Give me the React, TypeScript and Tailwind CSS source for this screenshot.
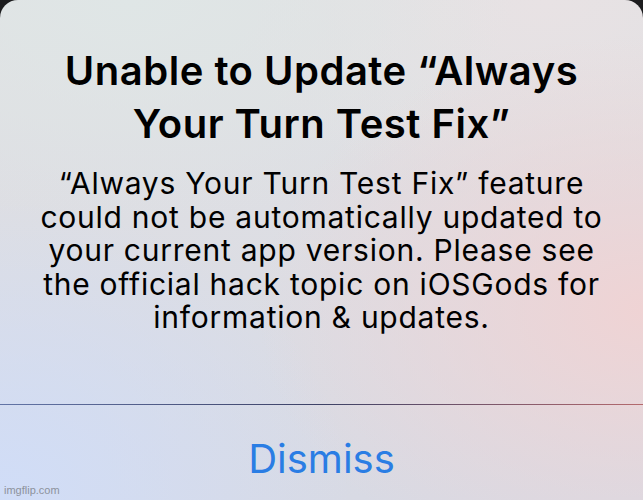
import React from 'react';

const bodyLines = [
  '“Always Your Turn Test Fix” feature',
  'could not be automatically updated to',
  'your current app version. Please see',
  'the official hack topic on iOSGods for',
  'information & updates.',
];

export default function App() {
  return (
    <div className="w-[643px] h-[500px] bg-[#1c1c1e] overflow-hidden">
      <div
        className="relative w-full h-[500px] rounded-t-[18px] overflow-hidden flex flex-col bg-[#dcdde4] bg-[image:radial-gradient(ellipse_60%_55%_at_100%_62%,#efd3d4_0%,transparent_100%),radial-gradient(ellipse_55%_60%_at_0%_100%,#d0ddf8_0%,transparent_100%),radial-gradient(ellipse_60%_45%_at_20%_0%,#dfe6e6_0%,transparent_100%),radial-gradient(ellipse_50%_40%_at_85%_0%,#e8e2e4_0%,transparent_100%),linear-gradient(180deg,#e1e1e3_0%,#d8dae4_100%)]"
        style={{ fontFamily: 'Inter, "Noto Sans", sans-serif' }}
      >
        {/* message */}
        <div className="flex flex-col items-center pt-[44px] pb-[69px] text-black text-center whitespace-nowrap">
          <h1 className="text-[40px] leading-[53px] font-semibold tracking-[0.5px]">
            Unable to Update “Always
            <br />
            Your Turn Test Fix”
          </h1>
          <div className="mt-[17px] text-[30px] leading-[33.5px] font-normal tracking-[0.75px]">
            {bodyLines.map((line) => (
              <div key={line}>{line}</div>
            ))}
          </div>
        </div>

        <div className="h-px w-full bg-[linear-gradient(90deg,#6274a6_0%,#3d4266_50%,#b46a6e_100%)]" />

        {/* action */}
        <div className="flex justify-center pt-[26px]">
          <span className="text-[40px] leading-[56px] text-[#2a7de4]">Dismiss</span>
        </div>

        <span
          className="absolute left-[4px] bottom-[2px] text-[11px] text-[#8d929c]"
          style={{ fontFamily: '"Liberation Sans", Arial, sans-serif' }}
        >
          imgflip.com
        </span>
      </div>
    </div>
  );
}
